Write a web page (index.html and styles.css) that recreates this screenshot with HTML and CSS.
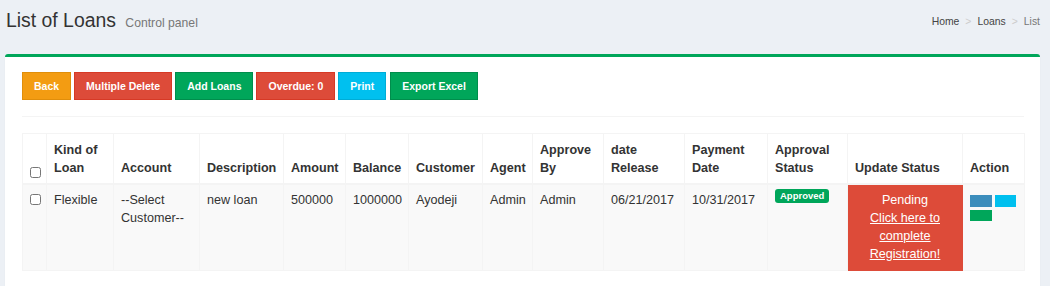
FILE: index.html
```
<!DOCTYPE html>
<html lang="en">
<head>
    <meta charset="UTF-8">
    <meta name="viewport" content="width=device-width, initial-scale=1.0">
    <title>List of Loans</title>
    <link rel="stylesheet" href="styles.css">
</head>
<body>
    <!-- page title + breadcrumb -->
    <section class="content-header">
        <h1>List of Loans <small>Control panel</small></h1>
        <ol class="breadcrumb">
            <li><a href="#">Home</a></li>
            <li><a href="#">Loans</a></li>
            <li class="active">List</li>
        </ol>
    </section>

    <section class="content">
        <div class="box box-success">
            <div class="box-body">
                <div class="toolbar">
                    <a href="#" class="btn btn-warning">Back</a>
                    <a href="#" class="btn btn-danger">Multiple Delete</a>
                    <a href="#" class="btn btn-success">Add Loans</a>
                    <a href="#" class="btn btn-danger">Overdue: 0</a>
                    <a href="#" class="btn btn-info">Print</a>
                    <a href="#" class="btn btn-success">Export Excel</a>
                </div>

                <hr>

                <table class="table">
                    <colgroup>
                        <col style="width:24px">
                        <col style="width:67px">
                        <col style="width:86px">
                        <col style="width:84px">
                        <col style="width:62px">
                        <col style="width:63px">
                        <col style="width:74px">
                        <col style="width:50px">
                        <col style="width:71px">
                        <col style="width:81px">
                        <col style="width:83px">
                        <col style="width:80px">
                        <col style="width:115px">
                        <col style="width:62px">
                    </colgroup>
                    <thead>
                        <tr>
                            <th><input type="checkbox" class="check"></th>
                            <th>Kind of Loan</th>
                            <th>Account</th>
                            <th>Description</th>
                            <th>Amount</th>
                            <th>Balance</th>
                            <th>Customer</th>
                            <th>Agent</th>
                            <th>Approve By</th>
                            <th>date Release</th>
                            <th>Payment Date</th>
                            <th>Approval Status</th>
                            <th>Update Status</th>
                            <th>Action</th>
                        </tr>
                    </thead>
                    <tbody>
                        <tr>
                            <td><input type="checkbox" class="check"></td>
                            <td>Flexible</td>
                            <td>--Select Customer--</td>
                            <td>new loan</td>
                            <td>500000</td>
                            <td>1000000</td>
                            <td>Ayodeji</td>
                            <td>Admin</td>
                            <td>Admin</td>
                            <td>06/21/2017</td>
                            <td>10/31/2017</td>
                            <td><span class="label label-success">Approved</span></td>
                            <td class="update-status">Pending<br><a href="#">Click here to complete Registration!</a></td>
                            <td>
                                <div class="actions">
                                    <a href="#" class="btn-xs bg-blue"></a>
                                    <a href="#" class="btn-xs bg-aqua"></a>
                                    <a href="#" class="btn-xs bg-green"></a>
                                </div>
                            </td>
                        </tr>
                    </tbody>
                </table>
            </div>
        </div>
    </section>
</body>
</html>
```

FILE: styles.css
```
body {
    margin: 0;
    background-color: #ecf0f5;
    font-family: "Liberation Sans", Arial, sans-serif;
    font-size: 12.6px;
    line-height: 18px;
    color: #333;
}
a {
    text-decoration: none;
}

/* header */
.content-header {
    display: flex;
    justify-content: space-between;
    align-items: center;
    padding: 7px 10px 0 6px;
}
.content-header h1 {
    margin: 0;
    font-size: 19.4px;
    font-weight: normal;
    line-height: 26px;
}
.content-header h1 small {
    font-size: 12.2px;
    color: #777;
    padding-left: 4px;
}
.breadcrumb {
    list-style: none;
    margin: 0;
    padding: 0;
    display: flex;
    font-size: 10.4px;
    line-height: 14px;
}
.breadcrumb a {
    color: #444;
}
.breadcrumb li + li::before {
    content: ">";
    color: #ccc;
    padding: 0 6px 0 6px;
}
.breadcrumb .active {
    color: #777;
}

/* box */
.content {
    padding: 0 10px 0 5px;
    margin-top: 18px;
}
.box {
    background: #fff;
    border-top: 3px solid #00a65a;
    border-radius: 3px;
    box-shadow: 0 1px 1px rgba(0, 0, 0, 0.1);
    height: 240px;
}
.box-body {
    padding: 15px 16px 0 17px;
}

/* buttons */
.toolbar {
    display: flex;
    gap: 3px;
}
.btn {
    display: inline-block;
    height: 26px;
    line-height: 26px;
    padding: 0 11px;
    border: 1px solid transparent;
    color: #fff;
    font-size: 10.5px;
    font-weight: bold;
}
.toolbar .btn:last-child {
    margin-left: 1px;
}
.btn-warning { background-color: #f39c12; border-color: #e08e0b; }
.btn-danger { background-color: #dd4b39; border-color: #d73925; }
.btn-success { background-color: #00a65a; border-color: #008d4c; }
.btn-info { background-color: #00c0ef; border-color: #00acd6; }

hr {
    border: 0;
    border-top: 1px solid #f4f4f4;
    margin: 16px 0 16px 0;
}

/* table */
.table {
    table-layout: fixed;
    border-collapse: collapse;
    width: 1002px;
    border: 1px solid #f4f4f4;
}
.table th,
.table td {
    padding: 7px 7px 6px 7px;
    border: 1px solid #f4f4f4;
    text-align: left;
    overflow: hidden;
}
.table th {
    vertical-align: bottom;
    font-weight: bold;
    border-bottom-width: 2px;
}
.table td {
    vertical-align: top;
    padding: 6px 7px 7px 7px;
}
.table tbody tr {
    background-color: #f9f9f9;
}
.check {
    width: 11px;
    height: 11px;
    margin: 3px 0 0 0;
    vertical-align: top;
}
.table th .check {
    margin: 8px 0 -1px 0;
}

.label {
    display: inline-block;
    background-color: #00a65a;
    color: #fff;
    font-size: 9.5px;
    font-weight: bold;
    line-height: 10px;
    padding: 2px 5px 2px 5px;
    border-radius: 3px;
    vertical-align: top;
    margin-top: -2px;
}

.table td.update-status {
    background-color: #dd4b39;
    color: #fff;
    text-align: center;
    border-color: #dd4b39;
}
.update-status a {
    color: #fff;
    text-decoration: underline;
}

.actions {
    display: flex;
    flex-wrap: wrap;
    gap: 3px;
    width: 48px;
    margin-top: 4px;
}
.btn-xs {
    display: block;
    width: 22px;
    height: 12px;
}
.bg-blue { background-color: #3c8dbc; }
.bg-aqua { background-color: #00c0ef; width: 21px; }
.bg-green { background-color: #00a65a; height: 11px; }
```
